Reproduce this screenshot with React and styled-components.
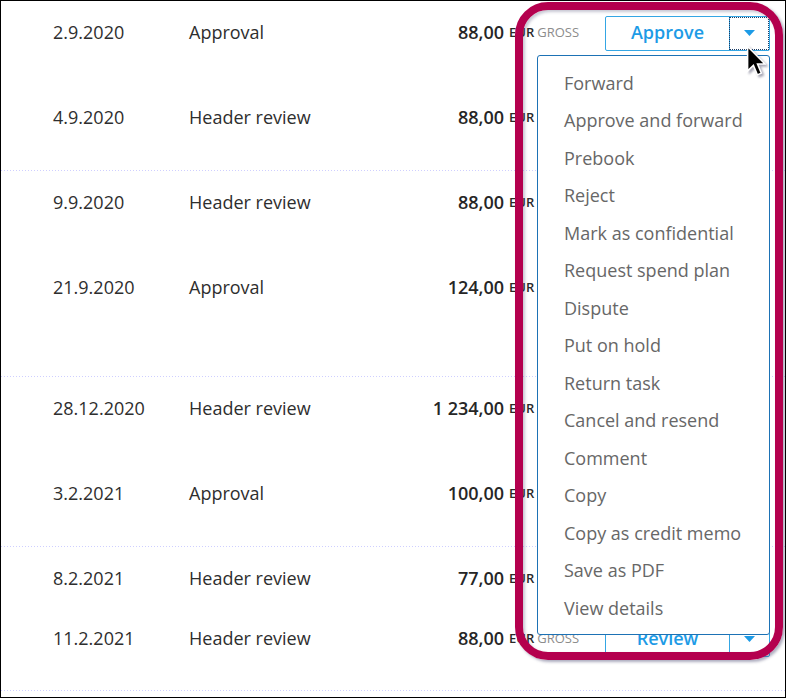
import React from 'react'
import styled, {createGlobalStyle} from 'styled-components'

const Global = createGlobalStyle`
  html, body {
    margin: 0;
    padding: 0;
    background: #fff;
  }
  body {
    font-family: "Open Sans", "Liberation Sans", sans-serif;
  }
`

const colors = {
  text: '#2e2e2e',
  muted: '#8c8c8c',
  menuText: '#676767',
  blue: '#1d9be6',
  blueBorder: '#34a6e4',
  menuBorder: '#1d72b5',
  divider: '#cfcfff',
  magenta: '#b4004e',
}

const Frame = styled.div`
  position: relative;
  width: 786px;
  height: 698px;
  box-sizing: border-box;
  border: 1px solid #000;
  overflow: hidden;
`

const Group = styled.div`
  padding-bottom: ${({extra}) => extra || 0}px;
  background-image: linear-gradient(to right, ${colors.divider} 1px, transparent 1px);
  background-size: 3px 1px;
  background-repeat: repeat-x;
  background-position: left bottom;
`

const Row = styled.div`
  display: grid;
  grid-template-columns: 136px 160px 155px 101px 165px;
  height: ${({h}) => h || 85}px;
  box-sizing: border-box;
  padding: 15px 0 0 52px;
  align-items: start;
  color: ${colors.text};
  font-size: 18px;
`

const Cell = styled.div`
  height: 35px;
  box-sizing: border-box;
  padding-bottom: 4px;
  display: flex;
  align-items: center;
  white-space: nowrap;
  justify-content: ${({right}) => (right ? 'flex-end' : 'flex-start')};
`

const Amount = styled.span`
  font-weight: 600;
  font-size: 18px;
  color: #262626;
`

const Currency = styled.div`
  height: 35px;
  box-sizing: border-box;
  padding: 0 0 4px 5px;
  display: flex;
  align-items: center;
  gap: 3px;
  font-size: 13px;
  white-space: nowrap;

  .cur {
    font-weight: 600;
    color: #2a2a2a;
  }
  .kind {
    color: ${colors.muted};
  }
`

const SplitButton = styled.div`
  display: flex;
  height: 35px;
  box-sizing: border-box;
  border: 1px solid ${colors.blueBorder};
  border-radius: 2px;
  background: #fff;
`

const MainBtn = styled.button`
  flex: 1;
  border: 0;
  background: transparent;
  color: ${colors.blue};
  font-family: inherit;
  font-size: 18px;
  font-weight: 600;
  padding: 0 0 4px;
  cursor: pointer;
`

const Toggle = styled.button`
  width: 40px;
  border: 0;
  border-left: 1px solid ${colors.blueBorder};
  background: transparent;
  display: flex;
  align-items: center;
  justify-content: center;
  padding: 0 0 2px;
  outline: ${({focused}) => (focused ? '1px dotted #1b3d66' : 'none')};
  outline-offset: -1px;
`

const Menu = styled.ul`
  position: absolute;
  left: 536px;
  top: 54px;
  width: 233px;
  margin: 0;
  padding: 8px 0 7px;
  list-style: none;
  box-sizing: border-box;
  background: #fff;
  border: 1px solid ${colors.menuBorder};
  border-radius: 3px;
  z-index: 2;
`

const MenuItem = styled.li`
  height: 37.5px;
  display: flex;
  align-items: center;
  padding-left: 26px;
  color: ${colors.menuText};
  font-size: 18px;
  white-space: nowrap;
`

const Highlight = styled.div`
  position: absolute;
  left: 514px;
  top: 1px;
  width: 268px;
  height: 658px;
  box-sizing: border-box;
  border: 8px solid ${colors.magenta};
  border-radius: 33px;
  box-shadow: 2px 2px 3px rgba(70, 70, 110, 0.45),
    inset 2px 2px 3px rgba(70, 70, 110, 0.3);
  z-index: 3;
  pointer-events: none;
`

const Cursor = styled.svg`
  position: absolute;
  left: 745px;
  top: 44px;
  z-index: 4;
  filter: drop-shadow(2px 2px 1px rgba(60, 60, 90, 0.45));
`

const Caret = () => (
  <svg width="11" height="6" viewBox="0 0 11 6">
    <path d="M0 0 H11 L5.5 6 Z" fill={colors.blue} />
  </svg>
)

const groups = [
  {
    rows: [
      {date: '2.9.2020', type: 'Approval', amount: '88,00', button: 'Approve', focused: true},
      {date: '4.9.2020', type: 'Header review', amount: '88,00'},
    ],
  },
  {
    extra: 36,
    rows: [
      {date: '9.9.2020', type: 'Header review', amount: '88,00'},
      {date: '21.9.2020', type: 'Approval', amount: '124,00', button: 'Approve'},
    ],
  },
  {
    rows: [
      {date: '28.12.2020', type: 'Header review', amount: '1\u00a0234,00'},
      {date: '3.2.2021', type: 'Approval', amount: '100,00'},
    ],
  },
  {
    rows: [
      {date: '8.2.2021', type: 'Header review', amount: '77,00', h: 60},
      {date: '11.2.2021', type: 'Header review', amount: '88,00', button: 'Review', h: 84},
    ],
  },
]

const actions = [
  'Forward',
  'Approve and forward',
  'Prebook',
  'Reject',
  'Mark as confidential',
  'Request spend plan',
  'Dispute',
  'Put on hold',
  'Return task',
  'Cancel and resend',
  'Comment',
  'Copy',
  'Copy as credit memo',
  'Save as PDF',
  'View details',
]

const TaskRow = ({row}) => (
  <Row h={row.h}>
    <Cell>{row.date}</Cell>
    <Cell>{row.type}</Cell>
    <Cell right>
      <Amount>{row.amount}</Amount>
    </Cell>
    <Currency>
      <span className="cur">EUR</span>
      <span className="kind">GROSS</span>
    </Currency>
    {row.button ? (
      <SplitButton>
        <MainBtn>{row.button}</MainBtn>
        <Toggle focused={row.focused}>
          <Caret />
        </Toggle>
      </SplitButton>
    ) : (
      <div />
    )}
  </Row>
)

const App = () => (
  <>
    <Global />
    <Frame>
      {groups.map((g, i) => (
        <Group key={i} extra={g.extra}>
          {g.rows.map(r => (
            <TaskRow key={r.date} row={r} />
          ))}
        </Group>
      ))}
      <Menu>
        {actions.map(a => (
          <MenuItem key={a}>{a}</MenuItem>
        ))}
      </Menu>
      <Highlight />
      <Cursor width="20" height="32" viewBox="0 0 13 21">
        <path
          d="M1 1 L1 17 L4.8 13.4 L7.4 19.6 L10 18.5 L7.5 12.5 L12.4 12.5 Z"
          fill="#000"
          stroke="#fff"
          strokeWidth="1"
          strokeLinejoin="miter"
        />
      </Cursor>
    </Frame>
  </>
)

export default App
